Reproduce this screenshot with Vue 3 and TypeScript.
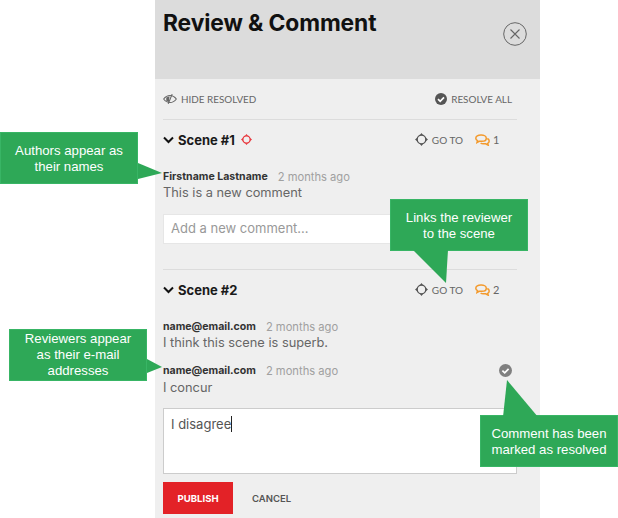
<script setup lang="ts">
interface Comment { author: string; text: string; resolved?: boolean }
const firstComments: Comment[] = [{ author: 'Firstname Lastname', text: 'This is a new comment' }]
const secondComments: Comment[] = [
  { author: 'name@email.com', text: 'I think this scene is superb.' },
  { author: 'name@email.com', text: 'I concur', resolved: true },
]
</script>

<template>
  <div class="page">
    <section class="panel">
      <header class="head">
        <h1>Review &amp; Comment</h1>
        <button class="close" aria-label="Close">
          <svg width="24" height="24" viewBox="0 0 24 24"><circle cx="12" cy="12" r="11.3" fill="none" stroke="#666" stroke-width="1"/><path d="M7.5 7.5l9 9M16.5 7.5l-9 9" stroke="#666" stroke-width="1.1" fill="none"/></svg>
        </button>
      </header>
      <div class="body">
        <div class="tools">
          <span class="tool">
            <svg width="14" height="12" viewBox="0 0 15 12"><path d="M.7 6C2.500 3.600 4.800 2.200 7.500 2.200S12.500 3.600 14.300 6C12.500 8.400 10.200 9.800 7.500 9.800S2.500 8.400 .7 6z" fill="none" stroke="#666" stroke-width="1.100"/><path d="M3.500 4.500L7 3l-.8 6.500L3.500 8z" fill="#666"/><path d="M9.800 .8L5.600 11.200" stroke="#666" stroke-width="1.200"/></svg>
            HIDE RESOLVED
          </span>
          <span class="tool">
            <svg width="12" height="12" viewBox="0 0 12 12"><circle cx="6" cy="6" r="6" fill="#555"/><path d="M3 6.100l2.200 2.200L9 4.300" fill="none" stroke="#fff" stroke-width="1.700"/></svg>
            RESOLVE ALL
          </span>
        </div>

        <div class="scene one">
          <div class="scene-row">
            <svg class="chev" width="11" height="8" viewBox="0 0 11 8"><path d="M1 1.500l4.500 4.500L10 1.500" fill="none" stroke="#111" stroke-width="2"/></svg>
            <strong>Scene #1</strong>
            <svg class="target" width="11" height="11" viewBox="0 0 13 13"><circle cx="6.500" cy="6.500" r="4.300" fill="none" stroke="#e8343a" stroke-width="1.500"/><path d="M6.500 0l1.700 2.200H4.800zM6.500 13l1.700-2.200H4.800zM0 6.500l2.200-1.700v3.400zM13 6.500l-2.200-1.700v3.400z" fill="#e8343a"/></svg>
            <span class="spacer"></span>
            <span class="goto">
              <svg width="13" height="13" viewBox="0 0 13 13"><circle cx="6.500" cy="6.500" r="4.300" fill="none" stroke="#555" stroke-width="1.300"/><path d="M6.500 0l1.700 2.200H4.800zM6.500 13l1.700-2.200H4.800zM0 6.500l2.200-1.700v3.400zM13 6.500l-2.200-1.700v3.400z" fill="#555"/></svg>
              GO TO
            </span>
            <span class="count">
              <svg width="15" height="12" viewBox="0 0 15 12"><path d="M5.800 1C3 1 .8 2.400 .8 4.200c0 1 .7 1.900 1.700 2.500L2 8.500l2.300-1.200h2.700c2.500 0 4.300-1.300 4.300-3.100S8.800 1 6.300 1z" fill="none" stroke="#f39a2d" stroke-width="1.500"/><path d="M12.300 4.500c1.200 .6 1.900 1.500 1.900 2.500 0 1-.6 1.800-1.500 2.300l.5 1.900-2.500-1.400H8.200c-1 0-2-.3-2.600-.8" fill="none" stroke="#f39a2d" stroke-width="1.500"/></svg>
              1
            </span>
          </div>
          <div class="comment" v-for="c in firstComments" :key="c.text">
            <div class="meta"><b>{{ c.author }}</b><span>2 months ago</span></div>
            <p>{{ c.text }}</p>
          </div>
          <div class="add">Add a new comment...</div>
        </div>

        <div class="scene two">
          <div class="scene-row">
            <svg class="chev" width="11" height="8" viewBox="0 0 11 8"><path d="M1 1.500l4.500 4.500L10 1.500" fill="none" stroke="#111" stroke-width="2"/></svg>
            <strong>Scene #2</strong>
            <span class="spacer"></span>
            <span class="goto">
              <svg width="13" height="13" viewBox="0 0 13 13"><circle cx="6.500" cy="6.500" r="4.300" fill="none" stroke="#555" stroke-width="1.300"/><path d="M6.500 0l1.700 2.200H4.800zM6.500 13l1.700-2.200H4.800zM0 6.500l2.200-1.700v3.400zM13 6.500l-2.200-1.700v3.400z" fill="#555"/></svg>
              GO TO
            </span>
            <span class="count">
              <svg width="15" height="12" viewBox="0 0 15 12"><path d="M5.800 1C3 1 .8 2.400 .8 4.200c0 1 .7 1.900 1.700 2.500L2 8.500l2.300-1.200h2.700c2.500 0 4.300-1.300 4.300-3.100S8.800 1 6.300 1z" fill="none" stroke="#f39a2d" stroke-width="1.500"/><path d="M12.300 4.500c1.200 .6 1.900 1.500 1.900 2.500 0 1-.6 1.800-1.500 2.300l.5 1.900-2.500-1.400H8.200c-1 0-2-.3-2.600-.8" fill="none" stroke="#f39a2d" stroke-width="1.500"/></svg>
              2
            </span>
          </div>
          <div class="comment" :class="{ resolved: c.resolved }" v-for="c in secondComments" :key="c.text">
            <div class="meta"><b>{{ c.author }}</b><span>2 months ago</span></div>
            <p>{{ c.text }}</p>
            <svg v-if="c.resolved" class="done" width="13" height="13" viewBox="0 0 13 13"><circle cx="6.500" cy="6.500" r="6.500" fill="#808080"/><path d="M3.400 6.600l2.300 2.200L9.600 4.800" fill="none" stroke="#fff" stroke-width="1.700"/></svg>
          </div>
          <div class="editor">I disagree<i class="caret"></i></div>
          <div class="actions">
            <button class="publish">PUBLISH</button>
            <button class="cancel">CANCEL</button>
          </div>
        </div>
      </div>
    </section>

    <div class="note n1">Authors appear as<br>their names
      <svg class="tail" style="left:137px;top:29px" width="25" height="22" viewBox="0 0 25 22"><path d="M0 1L24 11 0 17z" fill="#2ea857"/></svg>
    </div>
    <div class="note n2">Links the reviewer<br>to the scene
      <svg class="tail" style="left:22px;top:50px" width="36" height="34" viewBox="0 0 36 34"><path d="M0 0L33 33 35 0z" fill="#2ea857"/></svg>
    </div>
    <div class="note n3">Reviewers appear<br>as their e-mail<br>addresses
      <svg class="tail" style="left:137px;top:29px" width="16" height="16" viewBox="0 0 16 16"><path d="M0 0L15 8 0 14z" fill="#2ea857"/></svg>
    </div>
    <div class="note n4">Comment has been<br>marked as resolved
      <svg class="tail" style="left:22px;top:-36px" width="36" height="37" viewBox="0 0 36 37"><path d="M4 0L0 37H35z" fill="#2ea857"/></svg>
    </div>
  </div>
</template>

<style scoped>
.page { position: relative; width: 618px; height: 518px; overflow: hidden; background: #fff; font-family: Lato, "Open Sans", sans-serif; }
.panel { margin-left: 155px; width: 385px; height: 518px; background: #efefef; display: flex; flex-direction: column; }
.head { height: 79px; flex: none; background: #dcdcdc; display: flex; justify-content: space-between; padding: 0 13px 0 8px; box-sizing: border-box; }
.head h1 { margin: 8px 0 0; font: 700 22.800px/30px Inter, sans-serif; letter-spacing: -.1px; color: #111; }
.close { margin-top: 22px; padding: 0; width: 24px; height: 24px; border: 0; background: none; }
.body { padding: 0 23px 0 8px; }
.tools { height: 40px; display: flex; justify-content: space-between; align-items: center; padding-right: 5px; border-bottom: 1px solid #dcdcdc; }
.tool { display: flex; align-items: center; gap: 4px; font-size: 9.900px; color: #666; }
.scene-row { height: 39px; display: flex; align-items: center; font-size: 10px; color: #666; }
.chev { margin: 1px 4px 0 0; }
.scene-row strong { font: 700 13px/16px Inter, sans-serif; color: #1a1a1a; }
.target { margin-left: 6px; }
.spacer { flex: 1; }
.goto { display: flex; align-items: center; gap: 4px; }
.count { display: flex; align-items: center; gap: 3px; width: 42px; margin-left: 12px; box-sizing: border-box; font-size: 11px; }
.scene.one { height: 149px; border-bottom: 1px solid #dcdcdc; }
.comment { position: relative; margin-top: 10px; }
.one .comment { margin-top: 9px; }
.two .scene-row + .comment { margin-top: 9px; }
.meta { display: flex; gap: 10px; height: 17px; align-items: center; color: #a0a0a0; }
.meta b { font: 700 10.550px/17px Inter, sans-serif; color: #333; }
.meta span { font-family: Inter, sans-serif; font-size: 11.200px; }
.comment p { margin: -1px 0 0; padding-bottom: 1px; font: 400 12.800px/17px Inter, sans-serif; color: #666; }
.comment.resolved p { margin: 0; padding: 0; }
.add { margin-top: 12px; height: 30px; width: 232px; background: #fff; border: 1px solid #e6e6e6; box-sizing: border-box; padding-left: 7px; font: 400 13px/27px Inter, sans-serif; color: #999; }
.done { position: absolute; right: 5px; top: 2px; }
.editor { margin-top: 12px; height: 66px; background: #fff; border: 1px solid #ccc; box-sizing: border-box; padding: 5px 7px; font: 400 13px/20px Inter, sans-serif; color: #555; width: 354px; }
.caret { display: inline-block; width: 1px; height: 16px; background: #222; vertical-align: -3px; }
.actions { margin-top: 8px; display: flex; align-items: center; }
.publish { width: 70px; height: 32px; border: 0; background: #e32227; color: #fff; font: 700 9.600px/30px Inter, sans-serif; padding: 2px 0 0; }
.cancel { margin-left: 19px; padding: 2px 0 0; border: 0; background: none; color: #555; font: 600 9.500px/30px Inter, sans-serif; }
.note { position: absolute; width: 138px; height: 52px; box-sizing: border-box; padding-top: 1px; background: #2ea857; border: 1px solid #38b565; color: #fff; display: flex; align-items: center; justify-content: center; text-align: center; font: 400 13.200px/16px "Liberation Sans", Arial, sans-serif; }
.tail { position: absolute; overflow: visible; }
.n1 { left: 0; top: 132px; }
.n2 { left: 390px; top: 199px; }
.n3 { left: 9px; top: 329px; padding-top: 0; }
.n4 { left: 480px; top: 415px; }
</style>
